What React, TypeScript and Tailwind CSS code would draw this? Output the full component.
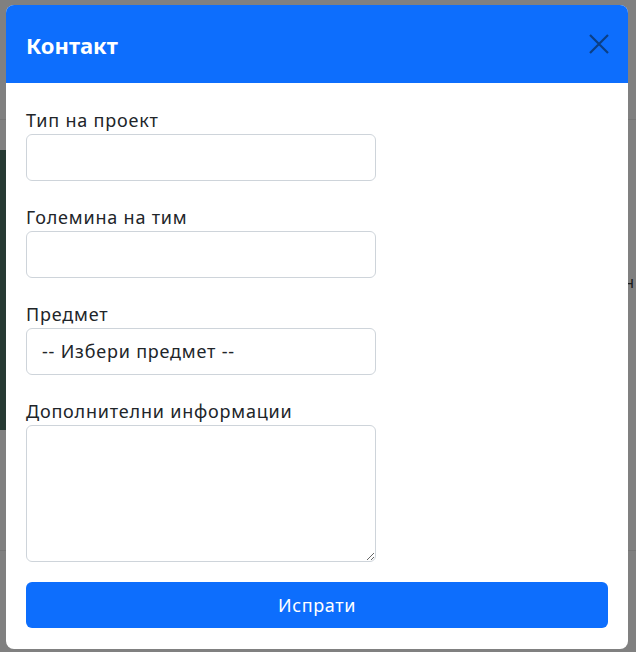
import React from "react";

export default function App() {
  const font = { fontFamily: '"Noto Sans", "Open Sans", sans-serif' };
  const lbl = "text-[18px] leading-[27px] tracking-[0.8px]";
  return (
    <div className="relative w-[636px] h-[652px] overflow-hidden bg-[#808080]" style={font}>
      {/* faint underlying page */}
      <div className="absolute left-0 top-[150px] w-[10px] h-[280px] bg-[#273a33]" />
      <div className="absolute left-0 top-[119px] w-[636px] h-px bg-[#767676]" />
      <div className="absolute left-0 top-[550px] w-[636px] h-px bg-[#767676]" />
      <div className="absolute right-[2px] top-[270px] text-[16px] text-[#1a1a1a]">н</div>

      {/* modal */}
      <div className="absolute left-[6px] top-[5px] w-[622px] h-[644px] bg-white rounded-[8px] overflow-hidden flex flex-col">
        <div className="h-[78px] bg-[#0d6efd] flex items-center justify-between pl-[20px] pr-[19px]">
          <h5 className="text-white text-[22px] font-bold leading-none tracking-[0px] pt-[1px]">Контакт</h5>
          <svg width="20" height="20" viewBox="0 0 20 20">
            <path d="M1 1 L19 19 M19 1 L1 19" stroke="#0b3f86" strokeWidth="2.2" />
          </svg>
        </div>
        <div className="px-[20px] pt-[24px] pb-[20px] flex flex-col text-[#212529]">
          <label className={lbl}>Тип на проект</label>
          <input className="w-[350px] h-[47px] border border-[#ced4da] rounded-[6px] px-3 outline-none" />
          <label className={`${lbl} mt-[23px]`}>Големина на тим</label>
          <input className="w-[350px] h-[47px] border border-[#ced4da] rounded-[6px] px-3 outline-none" />
          <label className={`${lbl} mt-[23px]`}>Предмет</label>
          <div className="w-[350px] h-[47px] border border-[#ced4da] rounded-[6px] pl-[15px] flex items-center text-[18px] tracking-[0.8px] text-[#212529]">
            -- Избери предмет --
          </div>
          <label className={`${lbl} mt-[23px]`}>Дополнителни информации</label>
          <textarea className="w-[350px] h-[137px] border border-[#ced4da] rounded-[6px] px-3 outline-none resize-y" />
          <button className="mt-[20px] w-full h-[46px] bg-[#0d6efd] text-white rounded-[6px] text-[18px] tracking-[0.6px]">
            Испрати
          </button>
        </div>
      </div>
    </div>
  );
}
